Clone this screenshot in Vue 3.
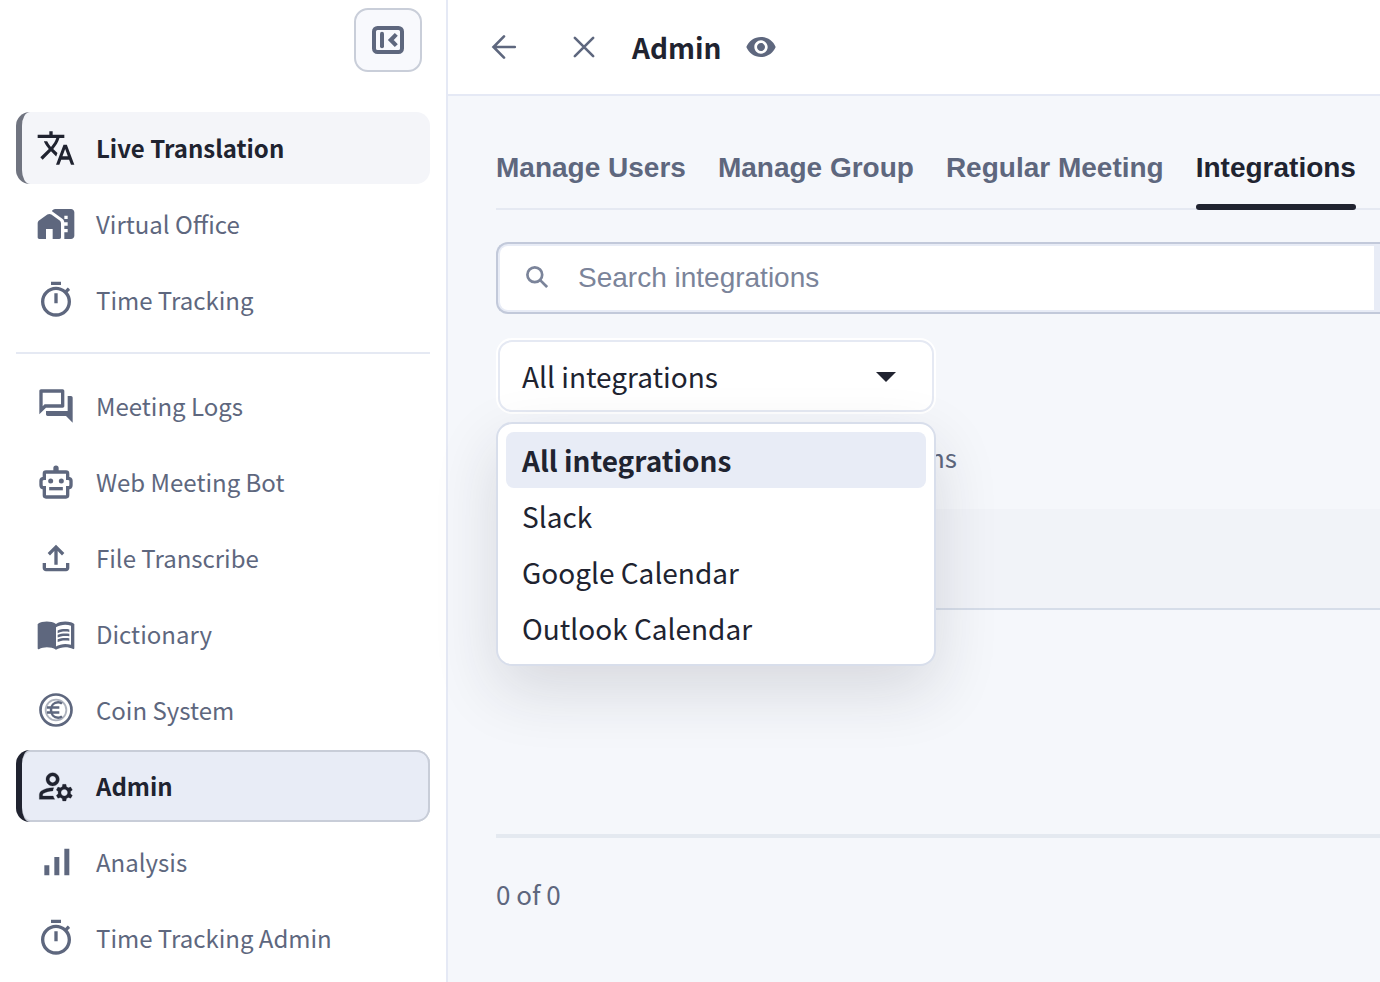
<template>
  <div class="app">
    <aside class="sidebar">
      <div class="sidebar-top">
        <button class="collapse-btn" type="button" aria-label="Collapse">
          <svg class="collapse-icon" viewBox="0 0 32 28" fill="none" stroke="currentColor">
            <rect x="2" y="2" width="28" height="24" rx="3.5" stroke-width="4" />
            <path d="M10 7.8v12.4" stroke-width="4" stroke-linecap="round" />
            <path d="M24.300 8.400L18.800 14l5.500 5.600" stroke-width="4.200" />
          </svg>
        </button>
      </div>

      <nav class="nav">
        <template v-for="item in navItems" :key="item.label">
          <a class="nav-item" :class="item.state">
            <svg class="nav-icon" viewBox="0 0 24 24" fill="currentColor">
              <g v-if="item.icon === 'coin'" fill="none" stroke="currentColor">
                <circle cx="12" cy="12" r="9.3" stroke-width="1.6" />
                <circle cx="12" cy="12" r="6.2" stroke-width="1.1" opacity=".5" />
                <path
                  d="M15.600 8.200c-.7-.6-1.500-.8-2.300-.8-2.600 0-4.300 2-4.300 4.600s1.700 4.600 4.300 4.600c.8 0 1.600-.2 2.300-.8M6.600 10.500h7.400M6.600 13.500h7.400"
                  stroke-width="1.500"
                />
              </g>
              <g v-else-if="item.icon === 'bot'">
                <path
                  d="M6 6h12q1 0 1 1v2.800q2 0 2 1.500v2.600q0 1.500-2 1.500V20q0 1-1 1H6q-1 0-1-1v-4.600q-2 0-2-1.500v-2.600q0-1.500 2-1.500V7q0-1 1-1z"
                  fill="none"
                  stroke="currentColor"
                  stroke-width="2"
                />
                <path d="M10.400 5.500V3.700a1.600 1.600 0 0 1 3.200 0v1.800z" />
                <circle cx="8.800" cy="11.400" r="1.500" />
                <circle cx="15.200" cy="11.400" r="1.500" />
                <path d="M7.900 15h8.200v2H7.900z" />
              </g>
              <path v-else :class="item.icon" :d="icons[item.icon]" />
            </svg>
            <span class="nav-label">{{ item.label }}</span>
          </a>
          <hr v-if="item.divider" class="nav-divider">
        </template>
      </nav>
    </aside>

    <main class="main">
      <header class="header">
        <svg class="header-icon" viewBox="0 0 24 24">
          <path d="M19.200 12H5.400M12 4.900L5 12l7 7.100" />
        </svg>
        <svg class="header-icon close" viewBox="0 0 24 24">
          <path d="M5.900 5.900l12.200 12.200M18.100 5.900L5.900 18.100" />
        </svg>
        <h1 class="header-title">Admin</h1>
        <svg class="eye-icon" viewBox="0 0 24 24" fill="currentColor">
          <path :d="icons.eye" />
        </svg>
      </header>

      <div class="content">
        <div class="tabs">
          <button
            v-for="tab in tabs"
            :key="tab"
            type="button"
            class="tab"
            :class="{ active: tab === activeTab }"
            @click="activeTab = tab"
          >
            {{ tab }}
          </button>
        </div>

        <div class="search">
          <div class="search-field">
            <svg class="search-icon" viewBox="0 0 22 22" fill="none" stroke="currentColor" stroke-width="2.700">
              <circle cx="8.800" cy="8.800" r="7.400" />
              <path d="M13.900 13.900l7.200 7.200" />
            </svg>
            <input v-model="query" class="search-input" type="text" placeholder="Search integrations">
          </div>
        </div>

        <div class="select">
          <div class="select-box" @click="open = !open">
            <span>{{ selected }}</span>
            <svg class="caret" viewBox="0 0 20 10" fill="currentColor">
              <path d="M0 0h20L10 10z" />
            </svg>
          </div>
          <ul v-if="open" class="menu">
            <li
              v-for="option in options"
              :key="option"
              class="option"
              :class="{ selected: option === selected }"
              @click="choose(option)"
            >
              {{ option }}
            </li>
          </ul>
        </div>

        <p class="summary">0 integrations</p>
        <div class="table-head" />
        <div class="table-body" />
        <div class="pager">0 of 0</div>
      </div>
    </main>
  </div>
</template>

<script setup>
import { ref } from 'vue'

const navItems = [
  { label: 'Live Translation', icon: 'translate', state: 'highlight' },
  { label: 'Virtual Office', icon: 'office' },
  { label: 'Time Tracking', icon: 'timer', divider: true },
  { label: 'Meeting Logs', icon: 'forum' },
  { label: 'Web Meeting Bot', icon: 'bot' },
  { label: 'File Transcribe', icon: 'upload' },
  { label: 'Dictionary', icon: 'book' },
  { label: 'Coin System', icon: 'coin' },
  { label: 'Admin', icon: 'admin', state: 'current' },
  { label: 'Analysis', icon: 'chart' },
  { label: 'Time Tracking Admin', icon: 'timer' }
]

const tabs = ['Manage Users', 'Manage Group', 'Regular Meeting', 'Integrations']
const options = ['All integrations', 'Slack', 'Google Calendar', 'Outlook Calendar']

const activeTab = ref('Integrations')
const query = ref('')
const open = ref(true)
const selected = ref('All integrations')

const choose = (option) => {
  selected.value = option
  open.value = false
}

const icons = {
  translate: 'M12.870 15.070l-2.540-2.510.030-.030c1.740-1.940 2.980-4.170 3.710-6.530H17V4h-7V2H8v2H1v1.990h11.170C11.500 7.920 10.440 9.750 9 11.350 8.070 10.320 7.300 9.190 6.690 8h-2c.730 1.630 1.730 3.170 2.980 4.560l-5.090 5.020L4 19l5-5 3.110 3.110.760-2.040zM18.500 10h-2L12 22h2l1.120-3h4.750L21 22h2l-4.500-12zm-2.620 7l1.620-4.330L19.120 17h-3.240z',
  office: 'M1 11.500V20c0 .6.400 1 1 1h4v-6h4v6h4c.6 0 1-.4 1-1v-8.500c0-.6-.3-1.200-.8-1.600L9.200 6.300c-.7-.5-1.700-.5-2.400 0l-5 3.600c-.5.4-.8 1-.8 1.600zM21 3H11.500c-.9 0-1.700.6-1.900 1.300l6.200 4.500c.8.600 1.200 1.500 1.200 2.400V11h2v2h-2v2h2v2h-2v4h4c1.100 0 2-.9 2-2V5c0-1.100-.9-2-2-2zm-2 6h-2V7h2v2z',
  timer: 'M15 1H9v2h6V1zm-4 13h2V8h-2v6zm8.030-6.610l1.420-1.420c-.430-.510-.900-.990-1.410-1.410l-1.420 1.420C16.070 4.740 14.120 4 12 4c-4.970 0-9 4.030-9 9s4.020 9 9 9 9-4.030 9-9c0-2.120-.740-4.070-1.970-5.610zM12 20c-3.870 0-7-3.130-7-7s3.130-7 7-7 7 3.130 7 7-3.130 7-7 7z',
  forum: 'M15 4v7H5.170L4 12.170V4h11m1-2H3c-.550 0-1 .450-1 1v14l4-4h10c.550 0 1-.450 1-1V3c0-.550-.450-1-1-1zm5 4h-2v9H6v2c0 .550.450 1 1 1h11l4 4V7c0-.550-.450-1-1-1z',
  upload: 'M11 16V7.850l-2.600 2.600L7 9l5-5 5 5-1.400 1.450-2.600-2.600V16h-2zM6 20c-.550 0-1.020-.196-1.413-.587A1.926 1.926 0 0 1 4 18v-3h2v3h12v-3h2v3c0 .550-.196 1.020-.587 1.413A1.926 1.926 0 0 1 18 20H6z',
  book: 'M21 5c-1.110-.350-2.330-.5-3.500-.5-1.950 0-4.050.4-5.500 1.500-1.450-1.100-3.550-1.500-5.500-1.500S2.450 4.900 1 6v14.650c0 .250.250.5.5.5.1 0 .150-.050.250-.050C3.100 20.450 5.050 20 6.500 20c1.950 0 4.050.4 5.500 1.500 1.350-.850 3.800-1.500 5.500-1.500 1.650 0 3.350.3 4.750 1.050.1.050.150.050.250.050.250 0 .5-.250.5-.5V6c-.6-.450-1.250-.750-2-1zm0 13.500c-1.100-.350-2.300-.5-3.500-.5-1.700 0-4.150.650-5.500 1.500V8c1.350-.850 3.800-1.500 5.500-1.500 1.200 0 2.400.150 3.500.5v11.500zM17.500 10.500c.880 0 1.730.090 2.500.260V9.240c-.790-.150-1.640-.240-2.500-.240-1.700 0-3.240.290-4.500.830v1.660c1.130-.640 2.700-.990 4.500-.990zM13 12.490v1.660c1.130-.640 2.700-.990 4.500-.990.880 0 1.730.090 2.500.260V11.900c-.790-.150-1.640-.240-2.500-.240-1.700 0-3.240.3-4.500.830zM17.500 14.330c-1.700 0-3.240.290-4.500.830v1.660c1.130-.640 2.700-.990 4.500-.990.880 0 1.730.090 2.500.260v-1.520c-.790-.160-1.640-.240-2.500-.240z',
  admin: 'M4 18v-.650c0-.340.160-.660.410-.810C6.100 15.530 8.030 15 10 15c.030 0 .050 0 .080.010.1-.7.3-1.370.590-1.980-.220-.020-.440-.030-.670-.030-2.420 0-4.680.670-6.610 1.820-.880.520-1.390 1.500-1.390 2.530V20h9.260c-.420-.6-.750-1.280-.970-2H4zM10 12c2.210 0 4-1.790 4-4s-1.790-4-4-4-4 1.790-4 4 1.790 4 4 4zm0-6c1.100 0 2 .9 2 2s-.9 2-2 2-2-.9-2-2 .9-2 2-2zM20.750 16c0-.220-.030-.420-.060-.630l1.140-1.010-1-1.730-1.450.490c-.320-.270-.680-.480-1.080-.630L18 11h-2l-.3 1.490c-.4.150-.760.360-1.080.630l-1.450-.490-1 1.730 1.140 1.010c-.030.210-.060.410-.060.630s.030.420.060.630l-1.140 1.010 1 1.730 1.450-.490c.320.270.680.480 1.080.630L16 21h2l.3-1.490c.4-.150.760-.360 1.080-.630l1.450.490 1-1.730-1.140-1.010c.030-.210.060-.410.060-.630zM17 18c-1.100 0-2-.9-2-2s.9-2 2-2 2 .9 2 2-.9 2-2 2z',
  chart: 'M17 4h3v16h-3zM5 14h3v6H5zm6-5h3v11h-3z',
  eye: 'M12 4.500C7 4.500 2.730 7.610 1 12c1.730 4.390 6 7.500 11 7.500s9.270-3.110 11-7.500c-1.730-4.390-6-7.500-11-7.500zM12 17c-2.760 0-5-2.240-5-5s2.240-5 5-5 5 2.240 5 5-2.240 5-5 5zm0-8c-1.660 0-3 1.340-3 3s1.340 3 3 3 3-1.340 3-3-1.340-3-3-3z'
}
</script>

<style>
body {
  margin: 0;
  overflow: hidden;
}
</style>

<style scoped>
.app {
  display: flex;
  width: 100vw;
  height: 100vh;
  overflow: hidden;
  box-sizing: border-box;
  font-family: "Noto Sans CJK JP", "Noto Sans", sans-serif;
  color: #5e677e;
  background: #f5f7fb;
}

.app * {
  box-sizing: border-box;
}

.sidebar {
  flex: 0 0 448px;
  background: #fff;
  border-right: 2px solid #e5e9f5;
}

.sidebar-top {
  display: flex;
  justify-content: flex-end;
  height: 112px;
  padding: 8px 24px 0 0;
}

.collapse-btn {
  display: flex;
  align-items: center;
  justify-content: center;
  width: 68px;
  height: 64px;
  padding: 0;
  color: #5e677e;
  background: #f8f9fd;
  border: 2px solid #c9ced9;
  border-radius: 14px;
}

.collapse-icon {
  width: 32px;
  height: 28px;
}

.nav {
  display: flex;
  flex-direction: column;
  gap: 4px;
  padding: 0 16px;
}

.nav-item {
  display: flex;
  align-items: center;
  flex-shrink: 0;
  gap: 20px;
  height: 72px;
  padding-left: 14px;
  border-left: 6px solid transparent;
  border-radius: 14px;
}

.nav-item.highlight {
  color: #202330;
  background: #f4f5f9;
  border-left-color: #707480;
}

.nav-item.current {
  color: #202330;
  background: #e8ecf6;
  border-left-color: #202330;
  box-shadow: inset -2px 0 #c8cdd8, inset 0 2px #c8cdd8, inset 0 -2px #c8cdd8;
}

.nav-icon {
  width: 40px;
  height: 40px;
}

.nav-icon .admin {
  stroke: currentColor;
  stroke-width: 0.15;
}

.nav-label {
  font-size: 24px;
  line-height: 36px;
}

.highlight .nav-label,
.current .nav-label {
  font-weight: 700;
}

.nav-divider {
  width: 100%;
  height: 2px;
  margin: 12px 0;
  background: #e5e9f3;
  border: 0;
}

.main {
  flex: 1;
  min-width: 0;
}

.header {
  display: flex;
  align-items: center;
  height: 96px;
  padding-left: 38px;
  background: #fff;
  border-bottom: 2px solid #e5e9f5;
}

.header-icon {
  width: 36px;
  height: 36px;
  fill: none;
  stroke: currentColor;
  stroke-width: 1.75;
  stroke-linecap: round;
}

.header-icon.close {
  margin-left: 44px;
}

.header-title {
  margin: 0 24px 0 30px;
  font-size: 28px;
  font-weight: 700;
  line-height: 40px;
  color: #202330;
}

.eye-icon {
  width: 32px;
  height: 32px;
}

.content {
  padding: 32px 0 0 48px;
}

.tabs {
  display: flex;
  gap: 32px;
  height: 82px;
  border-bottom: 2px solid #e5e9f2;
}

.tab {
  height: 82px;
  padding: 0 0 2px;
  font-family: "Liberation Sans", Arial, sans-serif;
  font-size: 28px;
  font-weight: 700;
  white-space: nowrap;
  color: #5e677e;
  background: none;
  border: 0;
}

.tab.active {
  position: relative;
  color: #202330;
}

.tab.active::after {
  content: "";
  position: absolute;
  right: 0;
  bottom: 0;
  left: 0;
  height: 6px;
  background: #202330;
  border-radius: 3px;
}

.search {
  height: 72px;
  margin-top: 32px;
  background: #e8ecf6;
  border: 2px solid #c2c9da;
  border-right: 0;
  border-radius: 12px 0 0 12px;
}

.search-field {
  display: flex;
  align-items: center;
  height: 64px;
  margin: 2px 6px 2px 2px;
  padding-left: 26px;
  background: #fff;
  border-radius: 8px 0 0 8px;
}

.search-icon {
  width: 22px;
  height: 22px;
  margin-bottom: 3px;
  color: #7b849a;
}

.search-input {
  flex: 1;
  min-width: 0;
  margin-left: 30px;
  padding: 0;
  font-family: "Liberation Sans", Arial, sans-serif;
  font-size: 28px;
  border: 0;
  outline: 0;
}

.search-input::placeholder {
  color: #7b849a;
}

.select {
  position: relative;
  display: flow-root;
  width: 440px;
  margin-top: 24px;
}

.select-box {
  display: flex;
  align-items: center;
  justify-content: space-between;
  height: 72px;
  margin: 2px;
  padding: 0 36px 0 22px;
  font-size: 28px;
  color: #202330;
  background: #fff;
  border: 2px solid #e5e9f3;
  border-radius: 14px;
  box-shadow: 0 0 0 2px #fff;
}

.caret {
  width: 20px;
  height: 10px;
  margin-top: 2px;
}

.menu {
  position: absolute;
  top: 84px;
  left: 0;
  width: 440px;
  margin: 0;
  padding: 8px;
  list-style: none;
  background: #fff;
  border: 2px solid #d8deeb;
  border-radius: 16px;
  box-shadow: 0 24px 64px rgba(32, 35, 48, 0.14);
}

.option {
  height: 56px;
  padding: 0 16px;
  font-size: 28px;
  line-height: 56px;
  color: #202330;
  border-radius: 8px;
}

.option.selected {
  font-weight: 700;
  background: #e8ecf6;
}

.summary {
  width: 461px;
  margin: 23px 0 0;
  font-size: 26px;
  line-height: 40px;
  text-align: right;
}

.table-head {
  height: 101px;
  margin-top: 32px;
  background: #f1f3f8;
  border-bottom: 2px solid #d6dde9;
}

.table-body {
  height: 228px;
  border-bottom: 4px solid #e4e9f0;
}

.pager {
  margin-top: 36px;
  font-size: 26px;
  line-height: 40px;
}
</style>
